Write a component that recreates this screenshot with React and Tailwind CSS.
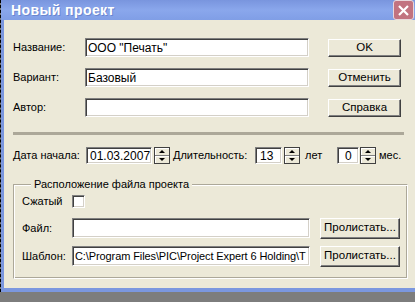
import { useState } from 'react';

const sunken =
  'bg-white border border-t-[#808080] border-l-[#808080] border-b-white border-r-white shadow-[inset_1px_1px_0_#404040,inset_-1px_-1px_0_#d4d0c8]';
const raised =
  'bg-[#ece9d8] border border-t-white border-l-white border-b-[#404040] border-r-[#404040] shadow-[inset_-1px_-1px_0_#808080]';

function Spinner() {
  // small up/down control next to numeric fields
  return (
    <div className="flex flex-col w-[16px] h-[17px] border border-[#404040] bg-[#ece9d8]">
      <div className="flex-1 flex items-center justify-center border-b border-[#808080] shadow-[inset_1px_1px_0_#fff]">
        <div className="w-0 h-0 border-l-[3px] border-r-[3px] border-b-[3px] border-l-transparent border-r-transparent border-b-black" />
      </div>
      <div className="flex-1 flex items-center justify-center shadow-[inset_1px_1px_0_#fff]">
        <div className="w-0 h-0 border-l-[3px] border-r-[3px] border-t-[3px] border-l-transparent border-r-transparent border-t-black" />
      </div>
    </div>
  );
}

function Button({ children, className = '' }) {
  return (
    <button className={`${raised} h-[18px] flex items-center justify-center text-[11.5px] text-black ${className}`}>
      {children}
    </button>
  );
}

export default function App() {
  const [name, setName] = useState('ООО "Печать"');
  const [variant, setVariant] = useState('Базовый');

  return (
    <div
      className="w-[415px] h-[302px] overflow-hidden bg-[#7d7d7d] text-black text-[11px] flex"
      style={{ fontFamily: '"Liberation Sans", Arial, sans-serif' }}
    >
      <div className="w-px h-[292px] border-l border-dashed border-black shrink-0" />
      <div className="w-[430px] h-[292px] shrink-0 flex flex-col bg-[#7b97df] pl-[3px] pb-[4px]">
        {/* --- title bar --- */}
        <div className="h-[20px] -ml-[3px] pl-[10px] flex items-center justify-between bg-gradient-to-b from-[#7995de] via-[#8aa7ec] to-[#809ee6]">
          <span className="text-white font-bold text-[14px] tracking-[0.4px] [text-shadow:1px_1px_0_#6a86cf]">
            Новый проект
          </span>
          <div className="w-[21px] h-[20px] mr-[17px] rounded-[3px] border border-[#e8d8dc] bg-[#c27380] flex items-center justify-center">
            <svg width="13" height="13" viewBox="0 0 13 13">
              <path d="M2 2 L11 11 M11 2 L2 11" stroke="#fff" strokeWidth="2.2" />
            </svg>
          </div>
        </div>

        {/* --- dialog body --- */}
        <div className="flex-1 bg-[#ece9d8] pl-[9px] pt-[18px]">
          <div className="flex flex-col gap-[11px] w-[392px]">
            <div className="flex items-center h-[19px]">
              <span className="w-[72px]">Название:</span>
              <input
                value={name}
                onChange={e => setName(e.target.value)}
                className={`${sunken} w-[224px] h-[19px] px-[2px] text-[12px] outline-none`}
              />
              <Button className="ml-[19px] w-[73px]">OK</Button>
            </div>
            <div className="flex items-center h-[19px]">
              <span className="w-[72px]">Вариант:</span>
              <input
                value={variant}
                onChange={e => setVariant(e.target.value)}
                className={`${sunken} w-[224px] h-[19px] px-[2px] text-[12px] outline-none`}
              />
              <Button className="ml-[19px] w-[73px]">Отменить</Button>
            </div>
            <div className="flex items-center h-[19px]">
              <span className="w-[72px]">Автор:</span>
              <input className={`${sunken} w-[224px] h-[19px] px-[2px] text-[12px] outline-none`} />
              <Button className="ml-[19px] w-[73px]">Справка</Button>
            </div>
          </div>

          <div className="h-[3px] w-[391px] mt-[15px] bg-[#aca899]" />

          {/* date + duration row */}
          <div className="flex items-center h-[17px] mt-[12px]">
            <span className="w-[73px]">Дата начала:</span>
            <div className={`${sunken} w-[66px] h-[17px] pl-[3px] text-[12px] flex items-center`}>01.03.2007</div>
            <div className="ml-[2px]"><Spinner /></div>
            <span className="ml-[3px] w-[82px]">Длительность:</span>
            <div className={`${sunken} w-[27px] h-[17px] pl-[4px] text-[12px] flex items-center`}>13</div>
            <div className="ml-[2px]"><Spinner /></div>
            <span className="ml-[5px] w-[32px]">лет</span>
            <div className={`${sunken} w-[22px] h-[17px] pl-[7px] text-[12px] flex items-center`}>0</div>
            <div className="ml-[1px]"><Spinner /></div>
            <span className="ml-[3px]">мес.</span>
          </div>

          <fieldset className="mt-[14px] w-[395px] h-[101px] border border-t-[#aca899] border-l-[#aca899] border-b-white border-r-white shadow-[inset_1px_1px_0_#fff,inset_-1px_-1px_0_#aca899] pl-[8px]">
            <legend className="ml-[9px] px-[3px] bg-[#ece9d8] leading-[13px]">Расположение файла проекта</legend>
            <div className="flex items-center h-[13px] mt-[4px]">
              <span className="w-[50px]">Сжатый</span>
              <div className={`${sunken} w-[13px] h-[13px]`} />
            </div>
            <div className="flex items-center h-[20px] mt-[10px]">
              <span className="w-[50px]">Файл:</span>
              <div className={`${sunken} w-[238px] h-[20px]`} />
              <Button className="ml-[10px] w-[80px] h-[21px]">Пролистать...</Button>
            </div>
            <div className="flex items-center h-[20px] mt-[8px]">
              <span className="w-[50px]">Шаблон:</span>
              <div className={`${sunken} w-[238px] h-[20px] pl-[2px] text-[11px] tracking-[-0.1px] flex items-center overflow-hidden whitespace-nowrap`}>
                C:\Program Files\PIC\Project Expert 6 Holding\T
              </div>
              <Button className="ml-[10px] w-[80px] h-[21px]">Пролистать...</Button>
            </div>
          </fieldset>
        </div>
      </div>
    </div>
  );
}
